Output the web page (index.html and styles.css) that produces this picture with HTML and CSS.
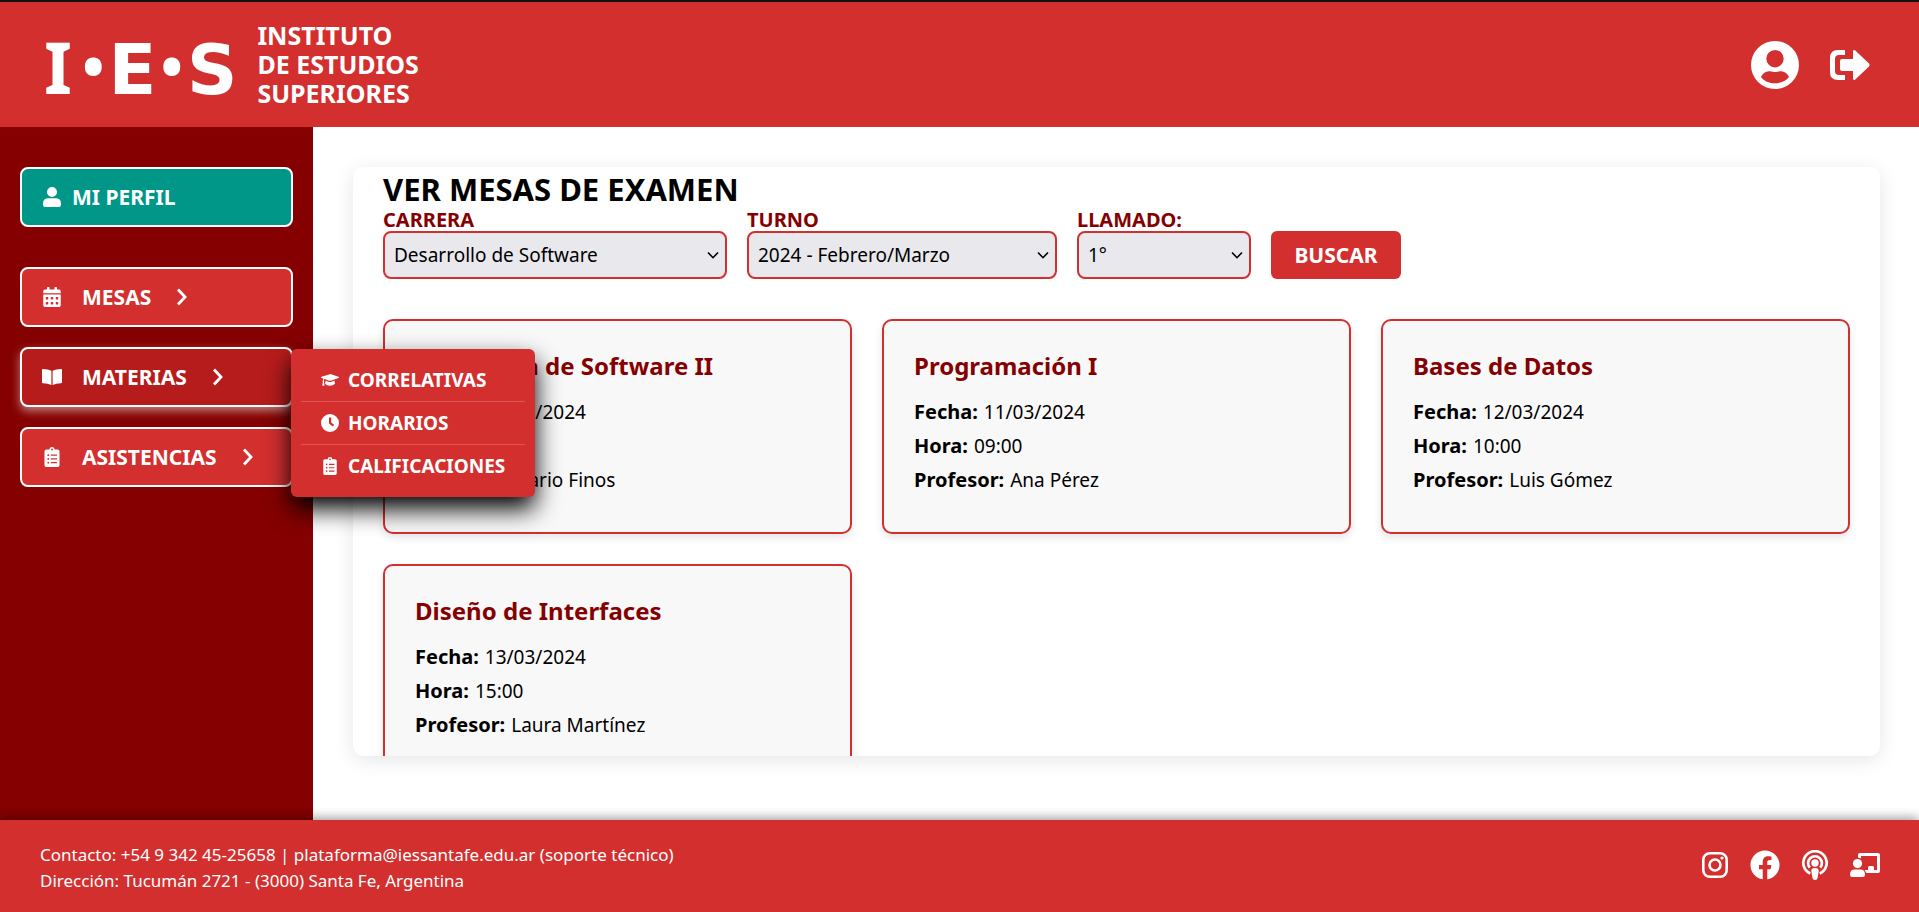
FILE: index.html
```html
<!DOCTYPE html>
<html lang="es">
<head>
<meta charset="utf-8">
<title>Instituto de Estudios Superiores</title>
<link rel="stylesheet" href="styles.css">
</head>
<body>
<svg class="sprite" aria-hidden="true">
  <symbol id="clipboard" viewBox="0 0 384 512"><path d="M336 64h-80a64 64 0 0 0-128 0H48c-26.500 0-48 21.500-48 48v352c0 26.500 21.500 48 48 48h288c26.500 0 48-21.500 48-48V112c0-26.500-21.500-48-48-48zM96 424a24 24 0 1 1 0-48 24 24 0 0 1 0 48zm0-96a24 24 0 1 1 0-48 24 24 0 0 1 0 48zm0-96a24 24 0 1 1 0-48 24 24 0 0 1 0 48zm96-192a24 24 0 1 1 0 48 24 24 0 0 1 0-48zm128 368a8 8 0 0 1-8 8H168a8 8 0 0 1-8-8v-16a8 8 0 0 1 8-8h144a8 8 0 0 1 8 8zm0-96a8 8 0 0 1-8 8H168a8 8 0 0 1-8-8v-16a8 8 0 0 1 8-8h144a8 8 0 0 1 8 8zm0-96a8 8 0 0 1-8 8H168a8 8 0 0 1-8-8v-16a8 8 0 0 1 8-8h144a8 8 0 0 1 8 8z"/></symbol>
  <symbol id="chevron" viewBox="0 0 10 18"><path d="M1.500 1.500 8.500 9l-7 7.500" fill="none" stroke="currentColor" stroke-width="2.800"/></symbol>
</svg>
<header class="header">
  <a class="brand" href="#"><span class="brand-short"><span class="initial-serif">I</span><span class="dot">•</span><span>E</span><span class="dot">•</span><span>S</span></span><span class="brand-name">INSTITUTO<br>DE ESTUDIOS<br>SUPERIORES</span></a>
  <div class="header-actions">
    <button class="icon-button" aria-label="Cuenta"><svg class="account" viewBox="0 0 50 50"><path fill-rule="evenodd" d="M25 1a24 24 0 1 0 0 48 24 24 0 0 0 0-48zm0 9a8.700 8.700 0 1 1 0 17.400A8.700 8.700 0 0 1 25 10zm-5 21.300q5 1.200 10 0c4-.5 7 1.700 9 5.700-3 4-8 6.300-14 6.300S14 41 11 37c2-4 5-6.200 9-5.700z"/></svg></button>
    <button class="icon-button" aria-label="Salir"><svg class="exit" viewBox="0 0 40 30"><path d="M15 0v5H9Q5 5 5 9v12q0 4 4 4h6v5H8q-8 0-8-8V8q0-8 8-8zM23 1.500q0-2 2-1.200L39 13.500q1 1.500 0 3L25 29.700q-2 .8-2-1.200V21H12q-2 0-2-2v-8q0-2 2-2h11z"/></svg></button>
  </div>
</header>
<div class="body">
  <nav class="sidebar">
    <a class="nav-item profile" href="#"><svg class="nav-icon" viewBox="0 0 18 20"><path d="M9 0a5 5 0 1 1 0 10A5 5 0 0 1 9 0zM5.500 11.200h7q5.500 0 5.500 5.300V18q0 2-2 2H2q-2 0-2-2v-1.500q0-5.300 5.500-5.300z"/></svg><span>MI PERFIL</span></a>
    <button class="nav-item"><svg class="nav-icon" viewBox="0 0 448 512"><path d="M0 464c0 26.500 21.500 48 48 48h352c26.500 0 48-21.500 48-48V192H0zm320-196c0-6.600 5.400-12 12-12h40c6.600 0 12 5.400 12 12v40c0 6.600-5.400 12-12 12h-40c-6.600 0-12-5.400-12-12zm0 128c0-6.600 5.400-12 12-12h40c6.600 0 12 5.400 12 12v40c0 6.600-5.400 12-12 12h-40c-6.600 0-12-5.400-12-12zM192 268c0-6.600 5.400-12 12-12h40c6.600 0 12 5.400 12 12v40c0 6.600-5.400 12-12 12h-40c-6.600 0-12-5.400-12-12zm0 128c0-6.600 5.400-12 12-12h40c6.600 0 12 5.400 12 12v40c0 6.600-5.400 12-12 12h-40c-6.600 0-12-5.400-12-12zM64 268c0-6.600 5.400-12 12-12h40c6.600 0 12 5.400 12 12v40c0 6.600-5.400 12-12 12H76c-6.600 0-12-5.400-12-12zm0 128c0-6.600 5.400-12 12-12h40c6.600 0 12 5.400 12 12v40c0 6.600-5.400 12-12 12H76c-6.600 0-12-5.400-12-12zM400 64h-48V16c0-8.800-7.200-16-16-16h-32c-8.800 0-16 7.200-16 16v48H160V16c0-8.800-7.200-16-16-16h-32c-8.800 0-16 7.200-16 16v48H48C21.500 64 0 85.500 0 112v48h448v-48c0-26.500-21.500-48-48-48z"/></svg><span>MESAS</span><svg class="chevron"><use href="#chevron"/></svg></button>
    <div class="nav-group">
      <button class="nav-item active" aria-expanded="true"><svg class="nav-icon" viewBox="0 0 20 20"><path d="M0 3q0-1 1-1 5 0 8.400 1.800V18Q6 16.200 1 16.200q-1 0-1-1zM20 3q0-1-1-1-5 0-8.400 1.800V18q3.400-1.800 8.400-1.800 1 0 1-1z"/></svg><span>MATERIAS</span><svg class="chevron"><use href="#chevron"/></svg></button>
      <ul class="submenu">
        <li><a href="#"><svg viewBox="0 0 20 16"><path d="M10 1.500q.5-.2 1 0l8.500 3q1 .6 0 1.200l-8.500 3q-1 .3-2 0L4 7q-1 .4-1 1.500.9.900.2 1.800L4 14.500H1.300l.8-4.200Q1.300 9.300 2.100 8.500q0-1.200.8-1.900L.6 5.700q-1-.6 0-1.200zM5 8.700l4 1.400q1 .4 2 0l4-1.400.5 3.600q-2 2.200-5.500 2.200t-5.500-2.200z"/></svg><span>CORRELATIVAS</span></a></li>
        <li><a href="#"><svg viewBox="0 0 18 18"><path fill-rule="evenodd" d="M9 0a9 9 0 1 0 0 18A9 9 0 0 0 9 0zM8 3.500h2.200v5l2.900 2.200-1.300 1.700L8 9.600z"/></svg><span>HORARIOS</span></a></li>
        <li><a href="#"><svg><use href="#clipboard"/></svg><span>CALIFICACIONES</span></a></li>
      </ul>
    </div>
    <button class="nav-item"><svg class="nav-icon"><use href="#clipboard"/></svg><span>ASISTENCIAS</span><svg class="chevron"><use href="#chevron"/></svg></button>
  </nav>
  <main class="main">
    <section class="panel">
      <h1 class="title">VER MESAS DE EXAMEN</h1>
      <form class="filters" onsubmit="return false">
        <div class="field career"><label for="carrera">CARRERA</label><select id="carrera"><option>Desarrollo de Software</option></select></div>
        <div class="field term"><label for="turno">TURNO</label><select id="turno"><option>2024 - Febrero/Marzo</option></select></div>
        <div class="field call"><label for="llamado">LLAMADO:</label><select id="llamado"><option>1°</option></select></div>
        <button class="search">BUSCAR</button>
      </form>
      <div class="cards">
        <article class="card"><h2>Ingeniería de Software II</h2><p><strong>Fecha:</strong> 10/03/2024</p><p><strong>Hora:</strong> 08:00</p><p><strong>Profesor:</strong> Mario Finos</p></article>
        <article class="card"><h2>Programación I</h2><p><strong>Fecha:</strong> 11/03/2024</p><p><strong>Hora:</strong> 09:00</p><p><strong>Profesor:</strong> Ana Pérez</p></article>
        <article class="card"><h2>Bases de Datos</h2><p><strong>Fecha:</strong> 12/03/2024</p><p><strong>Hora:</strong> 10:00</p><p><strong>Profesor:</strong> Luis Gómez</p></article>
        <article class="card"><h2>Diseño de Interfaces</h2><p><strong>Fecha:</strong> 13/03/2024</p><p><strong>Hora:</strong> 15:00</p><p><strong>Profesor:</strong> Laura Martínez</p></article>
      </div>
    </section>
  </main>
</div>
<footer class="footer">
  <address>Contacto: +54 9 342 45-25658 | plataforma@iessantafe.edu.ar (soporte técnico)<br>Dirección: Tucumán 2721 - (3000) Santa Fe, Argentina</address>
  <div class="social">
    <a href="#" aria-label="Instagram"><svg viewBox="0 0 30 30"><rect x="3.300" y="3.300" width="23.400" height="23.400" rx="6.500" fill="none" stroke="currentColor" stroke-width="2.600"/><circle cx="15" cy="15" r="5.500" fill="none" stroke="currentColor" stroke-width="2.600"/><circle cx="22" cy="8" r="1.600"/></svg></a>
    <a href="#" aria-label="Facebook"><svg viewBox="0 0 512 512"><path d="M504 256C504 119 393 8 256 8S8 119 8 256c0 123.780 90.690 226.380 209.250 245V327.690h-63V256h63v-54.640c0-62.150 37-96.480 93.670-96.480 27.140 0 55.520 4.840 55.520 4.840v61h-31.280c-30.800 0-40.410 19.120-40.410 38.730V256h68.780l-11 71.690h-57.780V501C413.310 482.380 504 379.780 504 256z"/></svg></a>
    <a href="#" aria-label="Podcast"><svg viewBox="0 0 30 30"><g fill="none" stroke="currentColor" stroke-width="2.700"><path d="M10.300 23.500a11.700 11.700 0 1 1 9.400 0"/><path d="M9.800 17.700a6.900 6.900 0 1 1 10.400 0"/></g><circle cx="15" cy="13" r="3.700"/><path d="M15 18q4 0 3.700 3l-1 6.500Q17.300 30 15 30t-2.700-2.500l-1-6.500Q11 18 15 18z"/></svg></a>
    <a href="#" aria-label="Aula virtual"><svg viewBox="0 0 30 30"><circle cx="7.500" cy="13.500" r="4.600"/><path d="M4.800 19.500h5.400q4.800 0 4.800 5 0 2.500-2 2.500H2q-2 0-2-2.500 0-5 4.800-5zM10 3h18q2 0 2 2v16q0 2-2 2H16.500l-2-3H18v-2.500q0-1.500 1.500-1.500h3q1.500 0 1.500 1.500V20h3V6H11v2.500L8 7.600V5q0-2 2-2z"/></svg></a>
  </div>
</footer>
</body>
</html>
```
FILE: styles.css
```css
* { box-sizing: border-box; }
body {
  display: flex;
  flex-direction: column;
  height: 100vh;
  margin: 0;
  border-top: 2px solid #111;
  overflow: hidden;
  background: #fff;
  color: #000;
  font: 19px/24px Tahoma, "Noto Sans", sans-serif;
}
button, select { font: inherit; color: inherit; }
button { border: 0; background: none; cursor: pointer; }
a { color: inherit; text-decoration: none; }
svg { display: block; fill: currentColor; }
.sprite { position: absolute; width: 0; height: 0; }

.header {
  display: flex;
  align-items: center;
  justify-content: space-between;
  flex: none;
  padding: 19px 49px 19px 44px;
  background: #d32f2f;
  color: #fff;
}
.brand { display: flex; align-items: center; gap: 20px; font-weight: 700; }
.brand-short {
  display: flex;
  align-items: baseline;
  gap: 4px;
  padding-top: 6px;
  font-family: Tahoma, "DejaVu Sans", sans-serif;
  font-size: 70px;
  line-height: 76px;
}
.initial-serif { margin-right: 6px; font-family: Tahoma, "Noto Sans", sans-serif; font-size: 72px; }
.dot { align-self: flex-start; font-family: "Noto Sans", sans-serif; font-size: 60px; line-height: 74px; }
.brand-name { font-size: 25px; line-height: 29px; }
.header-actions { display: flex; align-items: center; gap: 30px; }
.icon-button { padding: 0; }
.account { width: 50px; height: 50px; }
.exit { width: 40px; height: 30px; }

.body { display: flex; flex: 1; min-height: 0; }
.sidebar {
  display: flex;
  flex-direction: column;
  gap: 20px;
  flex: none;
  width: 313px;
  padding: 40px 20px;
  background: #850000;
  color: #fff;
}
.nav-item {
  display: flex;
  align-items: center;
  width: 100%;
  height: 60px;
  padding: 0 20px;
  gap: 20px;
  border: 2px solid #fff;
  border-radius: 8px;
  background: #d32f2f;
  font-size: 21px;
  font-weight: 700;
}
.profile { gap: 10px; margin-bottom: 20px; background: #009688; }
.active { background: #b71c1c; box-shadow: 0 4px 10px rgba(255, 255, 255, .5); }
.nav-icon { width: 20px; height: 20px; }
.chevron { width: 11px; height: 18px; margin-left: 5px; }
.nav-group { position: relative; }
.submenu {
  position: absolute;
  z-index: 2;
  top: 2px;
  left: calc(100% - 2px);
  margin: 0;
  padding: 10px;
  border-radius: 6px;
  background: #d32f2f;
  box-shadow: 0 12px 24px #000;
  list-style: none;
  font-weight: 700;
}
.submenu li + li { border-top: 1px solid rgba(255, 255, 255, .2); }
.submenu a { display: flex; align-items: center; gap: 9px; padding: 9px 20px; }
.submenu svg { width: 18px; height: 18px; }

.main { flex: 1; min-width: 0; padding: 40px 39px 64px 40px; }
.panel {
  height: 100%;
  padding: 4px 30px 0;
  overflow: hidden;
  border-radius: 10px;
  box-shadow: 0 4px 20px rgba(0, 0, 0, .1);
}
.title { margin: 0; font-size: 31px; line-height: 37px; }
.filters { display: flex; align-items: flex-end; gap: 20px; margin-bottom: 40px; }
.field { display: flex; flex-direction: column; }
.field label { line-height: 23px; color: #850000; font-size: 20px; font-weight: 700; }
.field select {
  height: 48px;
  padding: 0 30px 0 9px;
  border: 2px solid #d32f2f;
  border-radius: 8px;
  appearance: none;
  background: #e9e8ed url("data:image/svg+xml,%3Csvg xmlns='http://www.w3.org/2000/svg' width='12' height='8'%3E%3Cpath d='M1 1.500 6 6.700 11 1.500' fill='none' stroke='%23000' stroke-width='1.600'/%3E%3C/svg%3E") no-repeat right 6px center;
}
.career { width: 344px; }
.term { width: 310px; }
.call { width: 174px; }
.search {
  width: 130px;
  height: 48px;
  border-radius: 6px;
  background: #d32f2f;
  color: #fff;
  font-size: 21px;
  font-weight: 700;
}
.cards { display: grid; grid-template-columns: repeat(3, 1fr); gap: 30px; }
.card {
  padding: 30px;
  border: 2px solid #d32f2f;
  border-radius: 10px;
  background: #f8f8f8;
  box-shadow: 0 4px 8px rgba(0, 0, 0, .1);
}
.card h2 { margin: 0 0 20px; color: #850000; font-size: 24px; line-height: 29px; }
.card p { margin: 0 0 10px; }
.card strong { margin-right: 1px; font-size: 20px; }

.footer {
  display: flex;
  align-items: flex-start;
  justify-content: space-between;
  position: relative;
  flex: none;
  padding: 22px 39px 18px 40px;
  background: #d32f2f;
  box-shadow: 0 -2px 10px rgba(0, 0, 0, .4);
  color: #fff;
}
.footer address { font-size: 17px; line-height: 26px; font-style: normal; }
.social { display: flex; gap: 20px; padding-top: 8px; }
.social svg { width: 30px; height: 30px; }
```
